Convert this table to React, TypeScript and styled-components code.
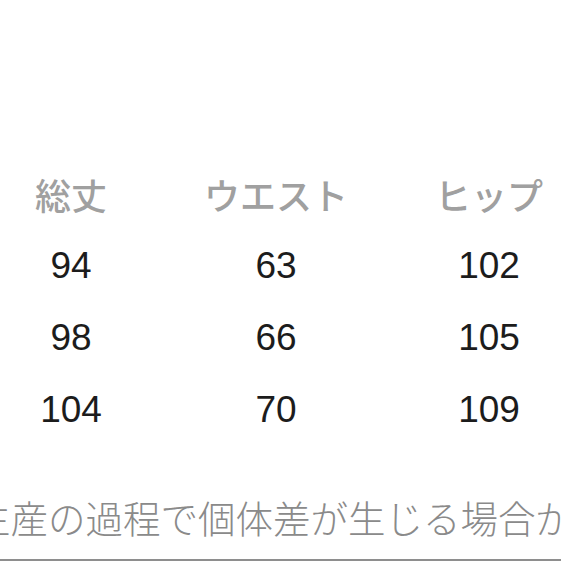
import React from "react";
import styled, { createGlobalStyle } from "styled-components";

const GlobalStyle = createGlobalStyle`
  html, body {
    margin: 0;
    padding: 0;
    background: #fff;
  }
  body {
    font-family: "Liberation Sans", "Noto Sans CJK JP", sans-serif;
  }
`;

const sizes = [
  { length: "94", waist: "63", hip: "102" },
  { length: "98", waist: "66", hip: "105" },
  { length: "104", waist: "70", hip: "109" },
];

const App = () => (
  <>
    <GlobalStyle />
    <Page>
      <SizeTable>
        <HeadCell>総丈</HeadCell>
        <HeadCell>ウエスト</HeadCell>
        <HeadCell>ヒップ</HeadCell>
        {sizes.map((row) => (
          <React.Fragment key={row.length}>
            <ValueCell>{row.length}</ValueCell>
            <ValueCell>{row.waist}</ValueCell>
            <ValueCell>{row.hip}</ValueCell>
          </React.Fragment>
        ))}
      </SizeTable>
      <Note>
        <NoteText>生産の過程で個体差が生じる場合があります。</NoteText>
      </Note>
    </Page>
  </>
);

const Page = styled.div`
  display: flex;
  flex-direction: column;
  height: 561px;
  padding-top: 158px;
  box-sizing: border-box;
  overflow: hidden;
`;

const SizeTable = styled.div`
  display: grid;
  grid-template-columns: 142px 268px 158px;
  grid-auto-rows: 72px;
`;

const HeadCell = styled.div`
  display: flex;
  align-items: center;
  justify-content: center;
  font-family: "Noto Sans CJK JP", sans-serif;
  font-size: 36px;
  font-weight: 500;
  line-height: 72px;
  color: #a0a0a0;
  white-space: nowrap;
`;

const ValueCell = styled.div`
  display: flex;
  align-items: center;
  justify-content: center;
  font-family: "Liberation Sans", Arial, sans-serif;
  font-size: 37px;
  line-height: 72px;
  color: #1c1c1c;
`;

const Note = styled.div`
  margin-top: auto;
  height: 79px;
  border-bottom: 2px solid #8e8e8e;
  overflow: hidden;
`;

const NoteText = styled.p`
  margin: 0 0 0 -27px;
  font-family: "Noto Sans CJK JP", sans-serif;
  font-size: 37.5px;
  font-weight: 300;
  line-height: 74px;
  color: #8a8a8a;
  white-space: nowrap;
`;

export default App;
